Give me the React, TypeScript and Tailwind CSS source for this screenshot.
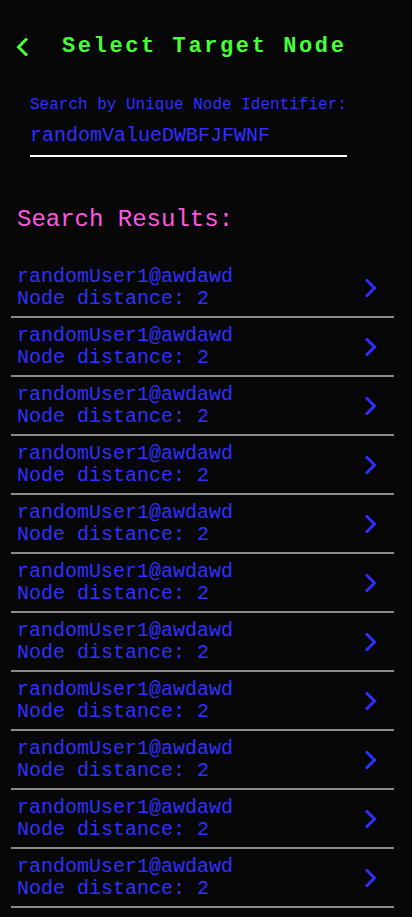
import { useState } from "react";

const results = Array.from({ length: 11 }, (_, i) => ({
  id: i,
  name: "randomUser1@awdawd",
  distance: 2,
}));

function Chevron({ dir, className }: { dir: "left" | "right"; className?: string }) {
  return (
    <svg width="12" height="18" viewBox="0 0 12 18" className={className} fill="none">
      {dir === "left" ? (
        <polyline points="10,1.5 2.5,9 10,16.5" stroke="currentColor" strokeWidth="3" strokeLinecap="square" />
      ) : (
        <polyline points="2,1.5 9.5,9 2,16.5" stroke="currentColor" strokeWidth="3" strokeLinecap="square" />
      )}
    </svg>
  );
}

export default function App() {
  const [query, setQuery] = useState("randomValueDWBFJFWNF");

  return (
    <div
      className="min-h-screen w-full bg-[#070707] pb-2"
      style={{ fontFamily: '"Liberation Mono", "DejaVu Sans Mono", monospace' }}
    >
      {/* header */}
      <div className="flex items-center pt-[31px] pl-[16px] h-[62px]">
        <button className="text-[#46ff37] w-[14px]">
          <Chevron dir="left" />
        </button>
        <h1 className="ml-[32px] text-[22px] font-bold tracking-[2.6px] text-[#46ff37] leading-none">
          Select Target Node
        </h1>
      </div>

      {/* search box */}
      <div className="mt-[32px] ml-[30px] w-[317px]">
        <label className="block text-[16px] leading-[20px] text-[#2f2fff] pt-[1px]">
          Search by Unique Node Identifier:
        </label>
        <input
          value={query}
          onChange={(e) => setQuery(e.target.value)}
          className="mt-[9px] w-full bg-transparent text-[20px] leading-[24px] pb-[7px] text-[#2f2fff] outline-none border-b-2 border-white"
          style={{ fontFamily: "inherit" }}
        />
      </div>

      <h2 className="mt-[49px] ml-[17px] text-[24px] leading-[28px] text-[#ff57e1]">
        Search Results:
      </h2>

      <ul className="mt-[25px] mx-[11px] w-[383px]">
        {results.map((r) => (
          <li
            key={r.id}
            className="flex items-center justify-between h-[59px] pl-[6px] pr-[17px] pt-[1px] border-b-2 border-[#8a8a8a] text-[#2f2fff]"
          >
            <div className="text-[20px] leading-[22px]">
              <div>{r.name}</div>
              <div>Node distance: {r.distance}</div>
            </div>
            <Chevron dir="right" />
          </li>
        ))}
      </ul>
    </div>
  );
}
